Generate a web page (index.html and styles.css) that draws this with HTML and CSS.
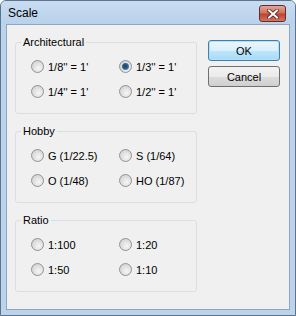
FILE: index.html
```html
<!DOCTYPE html>
<html lang="en">
<head>
  <meta charset="UTF-8">
  <title>Scale</title>
  <link rel="stylesheet" href="styles.css">
</head>
<body>
  <div class="window">
    <div class="titlebar">
      <span class="title">Scale</span>
      <button class="close" title="Close">
        <svg width="12" height="10" viewBox="0 0 12 10">
          <path d="M2 1.5 L10 8.5 M10 1.5 L2 8.5" stroke="#5a1f1f" stroke-width="3.6" stroke-linecap="square"/>
          <path d="M2 1.5 L10 8.5 M10 1.5 L2 8.5" stroke="#ffffff" stroke-width="2" stroke-linecap="square"/>
        </svg>
      </button>
    </div>
    <div class="frame">
      <div class="client">
        <div class="groups">
          <fieldset class="group">
            <legend>Architectural</legend>
            <div class="options">
              <label class="option"><span class="radio"></span>1/8'' = 1'</label>
              <label class="option"><span class="radio checked"></span>1/3'' = 1'</label>
              <label class="option"><span class="radio"></span>1/4'' = 1'</label>
              <label class="option"><span class="radio"></span>1/2'' = 1'</label>
            </div>
          </fieldset>
          <fieldset class="group">
            <legend>Hobby</legend>
            <div class="options">
              <label class="option"><span class="radio"></span>G (1/22.5)</label>
              <label class="option"><span class="radio"></span>S (1/64)</label>
              <label class="option"><span class="radio"></span>O (1/48)</label>
              <label class="option"><span class="radio"></span>HO (1/87)</label>
            </div>
          </fieldset>
          <fieldset class="group">
            <legend>Ratio</legend>
            <div class="options">
              <label class="option"><span class="radio"></span>1:100</label>
              <label class="option"><span class="radio"></span>1:20</label>
              <label class="option"><span class="radio"></span>1:50</label>
              <label class="option"><span class="radio"></span>1:10</label>
            </div>
          </fieldset>
        </div>
        <div class="actions">
          <button class="btn default">OK</button>
          <button class="btn">Cancel</button>
        </div>
      </div>
    </div>
  </div>
</body>
</html>
```

FILE: styles.css
```css
body { margin: 0; font-family: "Liberation Sans", Arial, sans-serif; font-size: 11px; color: #000; }
.window { width: 296px; height: 316px; box-sizing: border-box; border: 1px solid #5d7391; border-radius: 6px 6px 0 0; background: #bcd3ec; display: flex; flex-direction: column; overflow: hidden; }
.titlebar { height: 23px; flex: none; display: flex; align-items: flex-start; justify-content: space-between; background: linear-gradient(#c9ddf2, #b9d1ea); }
.title { font-size: 12px; margin: 5px 0 0 7px; color: #000; }
.close { width: 27px; height: 17px; margin: 4px 9px 0 0; padding: 0; border: 1px solid #6b2a2a; border-radius: 3px; background: linear-gradient(#e3a696, #cf7260 45%, #c0432e 55%, #d0775c); display: flex; align-items: center; justify-content: center; }
.frame { flex: 1; display: flex; padding: 0 5px 5px; }
.client { flex: 1; border: 1px solid #8ea6c1; background: #f0f0f0; display: flex; align-items: flex-start; padding: 11px 0 0 8px; }
.groups { width: 182px; display: flex; flex-direction: column; gap: 11px; }
.group { margin: 0; padding: 5px 0 9px 15px; border: 1px solid #d5dfe5; border-radius: 3px; }
.group legend { padding: 0 2px; margin-left: -10px; line-height: 13px; }
.options { display: grid; grid-template-columns: 88px 1fr; grid-auto-rows: 25px; }
.option { display: flex; align-items: center; gap: 4px; }
.radio { width: 11px; height: 11px; border: 1px solid #929292; border-radius: 50%; background: radial-gradient(circle at 60% 65%, #f6f6f6, #e2e2e2 45%, #c9c9c9); display: flex; align-items: center; justify-content: center; }
.radio.checked::after { content: ""; width: 7px; height: 7px; border-radius: 50%; background: radial-gradient(circle at 45% 45%, #1b3b5c, #2d6797 50%, #77bde9); }
.actions { margin: 4px 0 0 11px; display: flex; flex-direction: column; gap: 5px; }
.btn { width: 72px; height: 21px; padding: 0; font: inherit; color: #000; border: 1px solid #707070; border-radius: 3px; background: linear-gradient(#f2f2f2, #ebebeb 50%, #dddddd 50%, #cfcfcf); }
.btn.default { border-color: #3c7fb1; background: linear-gradient(#eaf6fd, #d9f0fc 50%, #bee6fd 50%, #a7d9f5); box-shadow: inset 0 0 0 1px #b4e0f6; }
```
